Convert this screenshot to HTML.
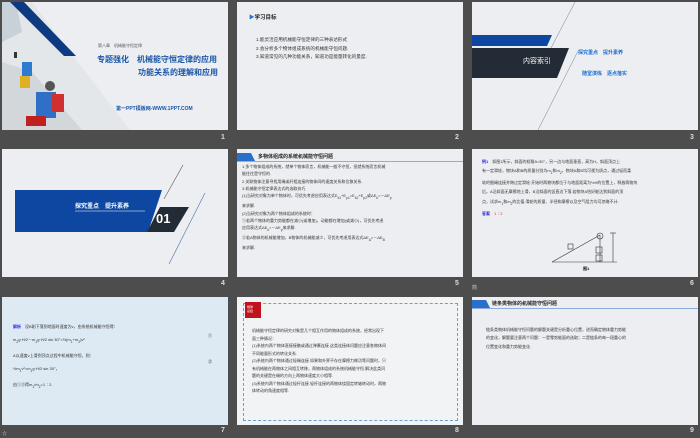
<!DOCTYPE html><html><head><meta charset="utf-8"><style>
body{margin:0;width:700px;height:438px;background:#4d4d4d;position:relative;overflow:hidden;font-family:"Liberation Sans","Noto Sans CJK SC",sans-serif}
.s{position:absolute;width:226px;height:128px;background:#eceef1;overflow:hidden}
.n{position:absolute;color:#ddd;font-size:7px;font-weight:bold}
.a{position:absolute;white-space:nowrap}
.t{font-size:4.6px;color:#333;line-height:8.6px}
</style></head><body>
<!-- slide1 -->
<div class="s" style="left:2px;top:2px">
<svg width="226" height="128" style="position:absolute;left:0;top:0">
<polygon points="0,0 30,0 128,128 0,128" fill="#e4e7ea"/>
<polygon points="0,0 14,0 20,30 0,40" fill="#c8d0d8"/>
<polygon points="0,60 30,70 80,128 0,128" fill="#d2d7dc"/>
<polygon points="8,0 22,0 74,54 62,54" fill="#0e3a82"/>
<rect x="12" y="50" width="3" height="6" fill="#333"/>
<rect x="20" y="60" width="10" height="14" fill="#2d7bd0"/><rect x="18" y="74" width="10" height="12" fill="#e0b020"/>
<rect x="34" y="90" width="20" height="26" fill="#2f6fc8"/><circle cx="48" cy="84" r="5" fill="#555"/><rect x="50" y="92" width="12" height="18" fill="#d03030"/>
<rect x="24" y="114" width="20" height="10" fill="#c02020"/>
</svg>
<div class="a" style="left:96px;top:41px;font-size:4px;color:#555">第八章　机械能守恒定律</div>
<div class="a" style="left:95px;top:52px;font-size:8px;font-weight:bold;color:#1a56a8">专题强化　机械能守恒定律的应用</div>
<div class="a" style="left:136px;top:65px;font-size:8px;font-weight:bold;color:#1a56a8">功能关系的理解和应用</div>
<div class="a" style="left:114px;top:103px;font-size:5px;font-weight:bold;color:#1a56a8">第一PPT模板网-WWW.1PPT.COM</div>
</div>
<div class="n" style="left:221px;top:134px">1</div>
<!-- slide2 -->
<div class="s" style="left:237px;top:2px">
<div class="a" style="left:12px;top:11px;font-size:5.5px;font-weight:bold;color:#222"><span style="color:#2a6fc9">▶</span>学习目标</div>
<div class="a t" style="left:19px;top:34px">1.能灵活应用机械能守恒定律的三种表达形式<br>2.会分析多个物体组成系统的机械能守恒问题.<br>3.知道常见的几种功能关系，知道功是能量转化的量度.</div>
</div>
<div class="n" style="left:455px;top:134px">2</div>
<!-- slide3 -->
<div class="s" style="left:472px;top:2px">
<svg width="226" height="128" style="position:absolute;left:0;top:0">
<polygon points="0,33 80,33 75,44 0,44" fill="#0d47a1"/>
<polygon points="0,46 97,46 85,76 0,76" fill="#232b36"/>
<line x1="103" y1="0" x2="79" y2="46" stroke="#8a9ab0" stroke-width=".6"/>
<line x1="106" y1="49" x2="66" y2="128" stroke="#8a9ab0" stroke-width=".6"/>
</svg>
<div class="a" style="left:51px;top:54px;font-size:7px;color:#fff">内容索引</div>
<div class="a" style="top:47px;font-size:5px;font-weight:bold;color:#1a6fd0;left:106px">探究重点　提升素养</div>
<div class="a" style="top:68px;font-size:5px;font-weight:bold;color:#1a6fd0;left:110px">随堂演练　逐点落实</div>
</div>
<div class="n" style="left:690px;top:134px">3</div>
<!-- slide4 -->
<div class="s" style="left:2px;top:149px">
<svg width="226" height="128" style="position:absolute;left:0;top:0">
<polygon points="13,41 160,41 146,83 13,83" fill="#0d47a1"/>
<polygon points="158,58 187,58 172,83 145,83" fill="#232b36"/>
<line x1="181" y1="16" x2="162" y2="50" stroke="#555" stroke-width=".6"/>
<line x1="203" y1="44" x2="167" y2="115" stroke="#4a6fb0" stroke-width=".6"/>
<line x1="73" y1="62" x2="143" y2="62" stroke="#fff" stroke-width=".5"/>
</svg>
<div class="a" style="left:73px;top:52px;font-size:6px;font-weight:bold;color:#fff">探究重点　提升素养</div>
<div class="a" style="left:154px;top:62px;font-size:13px;font-weight:bold;color:#fff">01</div>
</div>
<div class="n" style="left:221px;top:280px">4</div>
<!-- slide5 -->
<div class="s" style="left:237px;top:149px">
<svg width="226" height="10" style="position:absolute;left:0;top:4px"><polygon points="0,0 14,0 18,8 0,8" fill="#2a6fc9"/><line x1="0" y1="8.5" x2="226" y2="8.5" stroke="#2a6fc9" stroke-width=".6"/></svg>
<div class="a" style="left:21px;top:4px;font-size:5px;font-weight:bold;color:#222">多物体组成的系统机械能守恒问题</div>
<div class="a" style="left:5px;top:14px;font-size:4px;color:#333;line-height:7.3px">1.多个物体组成的系统，就单个物体而言，机械能一般不守恒，但就系统而言机械<br>能往往是守恒的.<br>2.关联物体注意寻找用绳或杆相连接的物体间的速度关系和位移关系.<br>3.机械能守恒定律表达式的选取技巧<br>(1)当研究对象为单个物体时，可优先考虑应用表达式E<sub>k1</sub>+E<sub>p1</sub>=E<sub>k2</sub>+E<sub>p2</sub>或ΔE<sub>k</sub>=－ΔE<sub>p</sub><br>来求解.<br>(2)当研究对象为两个物体组成的系统时：<br>①若两个物体的重力势能都在减小(或增加)，动能都在增加(或减小)，可优先考虑<br>应用表达式ΔE<sub>k</sub>=－ΔE<sub>p</sub>来求解.<br>②若A物体的机械能增加，B物体的机械能减少，可优先考虑用表达式ΔE<sub>A</sub>=－ΔE<sub>B</sub><br>来求解.</div>
</div>
<div class="n" style="left:455px;top:280px">5</div>
<!-- slide6 -->
<div class="s" style="left:472px;top:149px">
<div class="a" style="left:10px;top:8px;font-size:4px;color:#333;line-height:9.2px"><b style="color:#2020e0">例1</b>　如图1所示，斜面的倾角θ=30°，另一边与地面垂直，高为H，斜面顶点上<br>有一定滑轮，物块A和B的质量分别为m<sub>1</sub>和m<sub>2</sub>，物块A和B均可视为质点，通过轻而柔<br>软的细绳连接并跨过定滑轮.开始时两物块都位于与地面距离为½H的位置上，释放两物块<br>后，A沿斜面无摩擦地上滑，B沿斜面的竖直边下落.若物块A恰好能达到斜面的顶<br>点，试求m<sub>1</sub>和m<sub>2</sub>的比值.滑轮的质量、半径和摩擦以及空气阻力均可忽略不计.<br><b style="color:#2020e0">答案</b>　<span style="color:#d03030">1∶2</span></div>
<svg width="226" height="128" style="position:absolute;left:0;top:0"><g stroke="#333" stroke-width=".6" fill="none"><line x1="80" y1="113" x2="145" y2="113"/><line x1="80" y1="113" x2="128" y2="86"/><line x1="128" y1="86" x2="128" y2="113"/><circle cx="128" cy="87" r="3"/><rect x="96" y="95" width="5" height="5"/><rect x="124" y="98" width="6" height="6"/><rect x="124" y="106" width="6" height="6"/><line x1="141" y1="84" x2="141" y2="113"/><line x1="138" y1="84" x2="144" y2="84"/></g></svg>
<div class="a" style="left:111px;top:117px;font-size:4px;font-weight:bold">图1</div>
</div>
<div class="n" style="left:690px;top:280px">6</div>
<div class="a" style="left:472px;top:284px;font-size:5px;color:#ccc">箭</div>
<!-- slide7 -->
<div class="s" style="left:2px;top:297px;background:#dde9f3">
<div class="a" style="left:11px;top:23px;font-size:4px;color:#333;line-height:13px"><b style="color:#2020e0">解析</b>　设B刚下落到地面时速度为v，由系统机械能守恒得：<br>m<sub>2</sub>g·H/2－m<sub>1</sub>g·H/2 sin 30°=½(m<sub>1</sub>+m<sub>2</sub>)v²<br>A以速度v上滑到顶点过程中机械能守恒，则：<br>½m<sub>1</sub>v²=m<sub>1</sub>g·H/2 sin 30°，<br>由①②得m<sub>1</sub>/m<sub>2</sub>=1∶2.</div>
<div class="a" style="left:206px;top:36px;font-size:4px">①</div><div class="a" style="left:206px;top:62px;font-size:4px">②</div>
</div>
<div class="n" style="left:221px;top:427px">7</div>
<div class="a" style="left:2px;top:430px;font-size:5px;color:#ccc">☆</div>
<!-- slide8 -->
<div class="s" style="left:237px;top:297px;background:#f2f3f5">
<div style="position:absolute;left:6px;top:6px;width:213px;height:116px;border:.7px dashed #6aa0d0"></div>
<div style="position:absolute;left:8px;top:5px;width:16px;height:16px;background:#c0141c"><div style="font-size:3px;color:#fff;padding:3px 2px;line-height:4px">规律<br>总结</div></div>
<div class="a" style="left:15px;top:30px;font-size:4px;color:#333;line-height:7.5px">机械能守恒定律的研究对象是几个相互作用的物体组成的系统，经常出现下<br>面三种情况：<br>(1)系统内两个物体直接接触或通过弹簧连接.这类连接体问题应注意各物体间<br>不同能量形式的转化关系.<br>(2)系统内两个物体通过轻绳连接.如果和外界不存在摩擦力做功等问题时，只<br>有机械能在两物体之间相互转移，两物体组成的系统机械能守恒.解决此类问<br>题的关键是在绳的方向上两物体速度大小相等.<br>(3)系统内两个物体通过轻杆连接.轻杆连接的两物体绕固定转轴转动时，两物<br>体转动的角速度相等.</div>
</div>
<div class="n" style="left:455px;top:427px">8</div>
<!-- slide9 -->
<div class="s" style="left:472px;top:297px">
<svg width="226" height="12" style="position:absolute;left:0;top:3px"><polygon points="0,0 14,0 18,8 0,8" fill="#2a6fc9"/><line x1="0" y1="8.5" x2="226" y2="8.5" stroke="#2a6fc9" stroke-width=".6"/></svg>
<div class="a" style="left:20px;top:3px;font-size:5px;font-weight:bold;color:#222">链条类物体的机械能守恒问题</div>
<div class="a" style="left:14px;top:29px;font-size:4px;color:#333;line-height:8.4px">链条类物体机械能守恒问题的解题关键是分析重心位置，进而确定物体重力势能<br>的变化，解题要注意两个问题：一是零势能面的选取；二是链条的每一段重心的<br>位置变化和重力势能变化.</div>
</div>
<div class="n" style="left:690px;top:427px">9</div>
</body></html>
